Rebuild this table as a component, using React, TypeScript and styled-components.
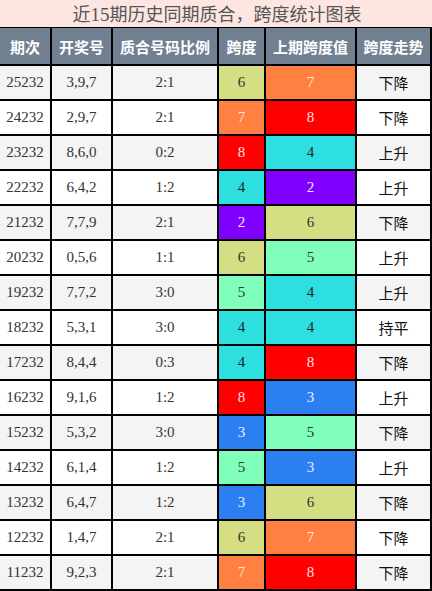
import React from "react";
import styled, { createGlobalStyle } from "styled-components";

const Global = createGlobalStyle`
  html, body { margin: 0; padding: 0; background: #fff; }
  body { width: 432px; height: 591px; overflow: hidden; }
`;

const Wrap = styled.div`
  width: 432px;
  height: 591px;
  box-sizing: border-box;
  display: flex;
  flex-direction: column;
  font-family: "Liberation Serif", "Noto Sans CJK SC", serif;
`;

const Title = styled.div`
  height: 27px;
  background: #fde6e1;
  color: #555;
  font-family: "Noto Sans CJK SC", sans-serif;
  font-size: 18px;
  line-height: 27px;
  text-align: center;
  box-sizing: border-box;
  padding-left: 2px;
  & > span { font-family: "Liberation Serif", serif; font-size: 19px; }
`;

const Grid = styled.div`
  display: grid;
  grid-template-columns: 50px 59px 104px 45px 89px 73px;
  grid-auto-rows: 33px;
  grid-template-rows: 36px;
  gap: 2px;
  background: #000;
  padding: 1px 2px 2px 0;
  flex: 1;
`;

const Head = styled.div`
  background: #708090;
  color: #fff;
  font-family: "Noto Sans CJK SC", sans-serif;
  font-weight: bold;
  font-size: 15px;
  display: flex;
  align-items: center;
  justify-content: center;
  letter-spacing: 0px;
`;

const Cell = styled.div<{ $alt: boolean; $cjk?: boolean }>`
  background: ${(p) => (p.$alt ? "#f4f4f4" : "#ffffff")};
  color: ${(p) => (p.$cjk ? "#111" : "#333")};
  font-family: ${(p) =>
    p.$cjk ? '"Noto Sans CJK SC", sans-serif' : '"Liberation Serif", serif'};
  font-size: 15px;
  display: flex;
  align-items: center;
  justify-content: center;
`;

const palette: Record<number, { bg: string; fg: string }> = {
  2: { bg: "#8000ff", fg: "#f4ecff" },
  3: { bg: "#2b7ff0", fg: "#e6f0ff" },
  4: { bg: "#2ddfdf", fg: "#222" },
  5: { bg: "#80ffbb", fg: "#333" },
  6: { bg: "#d5de83", fg: "#333" },
  7: { bg: "#ff8040", fg: "#ffe8d8" },
  8: { bg: "#ff0000", fg: "#ffe0e0" },
};

const Span = styled.div<{ $v: number }>`
  background: ${(p) => palette[p.$v].bg};
  color: ${(p) => palette[p.$v].fg};
  font-family: "Liberation Serif", serif;
  font-size: 15px;
  display: flex;
  align-items: center;
  justify-content: center;
`;

const rows: [string, string, string, number, number, string][] = [
  ["25232", "3,9,7", "2:1", 6, 7, "下降"],
  ["24232", "2,9,7", "2:1", 7, 8, "下降"],
  ["23232", "8,6,0", "0:2", 8, 4, "上升"],
  ["22232", "6,4,2", "1:2", 4, 2, "上升"],
  ["21232", "7,7,9", "2:1", 2, 6, "下降"],
  ["20232", "0,5,6", "1:1", 6, 5, "上升"],
  ["19232", "7,7,2", "3:0", 5, 4, "上升"],
  ["18232", "5,3,1", "3:0", 4, 4, "持平"],
  ["17232", "8,4,4", "0:3", 4, 8, "下降"],
  ["16232", "9,1,6", "1:2", 8, 3, "上升"],
  ["15232", "5,3,2", "3:0", 3, 5, "下降"],
  ["14232", "6,1,4", "1:2", 5, 3, "上升"],
  ["13232", "6,4,7", "1:2", 3, 6, "下降"],
  ["12232", "1,4,7", "2:1", 6, 7, "下降"],
  ["11232", "9,2,3", "2:1", 7, 8, "下降"],
];

const heads = ["期次", "开奖号", "质合号码比例", "跨度", "上期跨度值", "跨度走势"];

export default function App() {
  return (
    <Wrap>
      <Global />
      <Title>
        近<span>15</span>期历史同期质合，跨度统计图表
      </Title>
      <Grid>
        {heads.map((h) => (
          <Head key={h}>{h}</Head>
        ))}
        {rows.map((r, i) => {
          const alt = i % 2 === 0;
          return (
            <React.Fragment key={r[0]}>
              <Cell $alt={alt}>{r[0]}</Cell>
              <Cell $alt={alt}>{r[1]}</Cell>
              <Cell $alt={alt}>{r[2]}</Cell>
              <Span $v={r[3]}>{r[3]}</Span>
              <Span $v={r[4]}>{r[4]}</Span>
              <Cell $alt={alt} $cjk>
                {r[5]}
              </Cell>
            </React.Fragment>
          );
        })}
      </Grid>
    </Wrap>
  );
}
